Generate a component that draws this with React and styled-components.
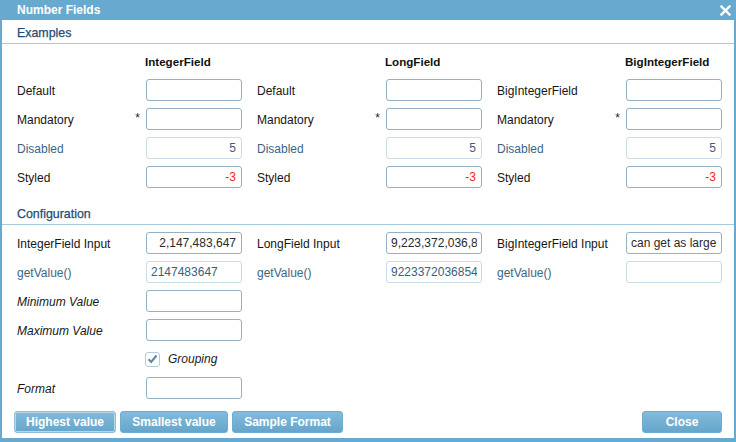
import React from "react";
import styled, { createGlobalStyle, css } from "styled-components";

const GlobalStyle = createGlobalStyle`
  html, body { margin: 0; padding: 0; background: #ffffff; }
  body { font-family: "Liberation Sans", Arial, sans-serif; font-size: 12px; }
  * { box-sizing: border-box; }
`;

const Window = styled.div`
  width: 736px;
  height: 442px;
  display: flex;
  flex-direction: column;
  background: #ffffff;
  border: 2px solid #68a9cf;
  border-top: 0;
  border-bottom-width: 4px;
`;

const TitleBar = styled.div`
  height: 20px;
  flex: none;
  margin: 0 -2px;
  padding: 0 5px 0 17px;
  background: #68a9cf;
  color: #ffffff;
  font-weight: bold;
  font-size: 12px;
  display: flex;
  align-items: center;
  justify-content: space-between;
`;

const CloseX = styled.svg`
  width: 11px;
  height: 11px;
  display: block;
`;

const SectionHeader = styled.div`
  height: 24px;
  flex: none;
  padding: 0 15px 3px;
  display: flex;
  align-items: flex-end;
  line-height: 14px;
  color: #1f4d73;
  font-size: 12.4px;
  -webkit-text-stroke: 0.25px #1f4d73;
  border-bottom: 1px solid #a9c9dc;
  ${(p) => p.$spaced && css`margin-top: 13px;`}
`;

const Body = styled.div`
  display: flex;
  flex-direction: column;
  gap: 7px;
  padding: ${(p) => (p.$top ?? 7)}px 13px 0 15px;
`;

const Row = styled.div`
  display: flex;
  gap: 15px;
  height: 22px;
`;

const Field = styled.div`
  display: grid;
  grid-template-columns: 129px 96px;
  align-items: center;
`;

const labelColors = {
  normal: "#161616",
  muted: "#3b6584",
};

const Label = styled.div`
  display: flex;
  justify-content: space-between;
  align-items: center;
  padding-right: 6px;
  padding-top: 1px;
  color: ${(p) => labelColors[p.$tone || "normal"]};
  font-style: ${(p) => (p.$italic ? "italic" : "normal")};
  white-space: nowrap;
`;

const Star = styled.span`
  color: #1c1c1c;
  position: relative;
  top: -2px;
`;

const ColumnTitle = styled.div`
  font-weight: bold;
  font-size: 11.6px;
  color: #111;
  white-space: nowrap;
  margin-left: -1px;
`;

const Input = styled.input`
  width: 96px;
  height: 22px;
  margin: 0;
  border: 1px solid ${(p) => (p.$disabled ? "#cddce5" : "#93b1c3")};
  border-radius: 3px;
  padding: 0 ${(p) => (p.$align === "left" ? "4px" : "5px")};
  font-family: "Liberation Sans", Arial, sans-serif;
  font-size: 12px;
  text-align: ${(p) => p.$align || "right"};
  color: ${(p) => (p.$red ? "#ff1a1a" : p.$disabled ? "#3a5f7c" : "#2a2a2a")};
  background: #ffffff;
  outline: none;
`;

const CheckCell = styled.label`
  display: flex;
  align-items: center;
  gap: 8px;
  font-style: italic;
  color: #1c1c1c;
  margin-left: -1px;
`;

const Box = styled.span`
  width: 15px;
  height: 15px;
  border: 1px solid #b8cbd8;
  border-radius: 3px;
  display: flex;
  align-items: center;
  justify-content: center;
  background: #fff;
`;

const ButtonBar = styled.div`
  margin-top: auto;
  padding: 0 12px 5px 12px;
  display: flex;
  gap: 4px;
`;

const Spacer = styled.div`
  flex: 1;
`;

const Button = styled.button`
  height: 22px;
  width: ${(p) => p.$w}px;
  margin: 0;
  padding: 0;
  border: 1px solid ${(p) => (p.$focused ? "#8fbedb" : "#6eacd1")};
  border-radius: 3px;
  background: linear-gradient(#82bbdc, #66a5cb);
  color: #ffffff;
  font-family: "Liberation Sans", Arial, sans-serif;
  font-size: 12px;
  font-weight: bold;
  ${(p) => p.$focused && css`box-shadow: inset 0 0 0 1px #b9d8ea;`}
`;

const examples = [
  { name: "IntegerField", first: "Default" },
  { name: "LongField", first: "Default" },
  { name: "BigIntegerField", first: "BigIntegerField" },
];

function ExampleRow({ kind }) {
  return (
    <Row>
      {examples.map((ex) => {
        if (kind === "default")
          return (
            <Field key={ex.name}>
              <Label>{ex.first}</Label>
              <Input readOnly value="" />
            </Field>
          );
        if (kind === "mandatory")
          return (
            <Field key={ex.name}>
              <Label>
                Mandatory<Star>*</Star>
              </Label>
              <Input readOnly value="" />
            </Field>
          );
        if (kind === "disabled")
          return (
            <Field key={ex.name}>
              <Label $tone="muted">Disabled</Label>
              <Input readOnly $disabled value="5" />
            </Field>
          );
        return (
          <Field key={ex.name}>
            <Label>Styled</Label>
            <Input readOnly $red value="-3" />
          </Field>
        );
      })}
    </Row>
  );
}

export default function App() {
  return (
    <>
      <GlobalStyle />
      <Window>
        <TitleBar>
          <span>Number Fields</span>
          <CloseX viewBox="0 0 11 11">
            <path d="M1.5 1.5 L9.5 9.5 M9.5 1.5 L1.5 9.5" stroke="#fff" strokeWidth="2.4" strokeLinecap="square" />
          </CloseX>
        </TitleBar>

        <SectionHeader>Examples</SectionHeader>
        <Body $top={6}>
          <Row>
            {examples.map((ex) => (
              <Field key={ex.name}>
                <span />
                <ColumnTitle>{ex.name}</ColumnTitle>
              </Field>
            ))}
          </Row>
          <ExampleRow kind="default" />
          <ExampleRow kind="mandatory" />
          <ExampleRow kind="disabled" />
          <ExampleRow kind="styled" />
        </Body>

        <SectionHeader $spaced>Configuration</SectionHeader>
        <Body $top={7}>
          <Row>
            <Field>
              <Label>IntegerField Input</Label>
              <Input readOnly value="2,147,483,647" />
            </Field>
            <Field>
              <Label>LongField Input</Label>
              <Input readOnly $align="left" value="9,223,372,036,854,775,807" />
            </Field>
            <Field>
              <Label>BigIntegerField Input</Label>
              <Input readOnly $align="left" value="can get as large as you want" />
            </Field>
          </Row>
          <Row>
            <Field>
              <Label $tone="muted">getValue()</Label>
              <Input readOnly $disabled $align="left" value="2147483647" />
            </Field>
            <Field>
              <Label $tone="muted">getValue()</Label>
              <Input readOnly $disabled $align="left" value="9223372036854775807" />
            </Field>
            <Field>
              <Label $tone="muted">getValue()</Label>
              <Input readOnly $disabled $align="left" value="" />
            </Field>
          </Row>
          <Row>
            <Field>
              <Label $italic>Minimum Value</Label>
              <Input readOnly value="" />
            </Field>
          </Row>
          <Row>
            <Field>
              <Label $italic>Maximum Value</Label>
              <Input readOnly value="" />
            </Field>
          </Row>
          <Row>
            <Field>
              <span />
              <CheckCell>
                <Box>
                  <svg width="11" height="10" viewBox="0 0 11 10">
                    <path d="M1.5 5.2 L4.2 8 L9.5 1.5" fill="none" stroke="#5a88a8" strokeWidth="2" />
                  </svg>
                </Box>
                Grouping
              </CheckCell>
            </Field>
          </Row>
          <Row>
            <Field>
              <Label $italic>Format</Label>
              <Input readOnly value="" />
            </Field>
          </Row>
        </Body>

        <ButtonBar>
          <Button $w={102} $focused>Highest value</Button>
          <Button $w={108}>Smallest value</Button>
          <Button $w={111}>Sample Format</Button>
          <Spacer />
          <Button $w={80}>Close</Button>
        </ButtonBar>
      </Window>
    </>
  );
}
